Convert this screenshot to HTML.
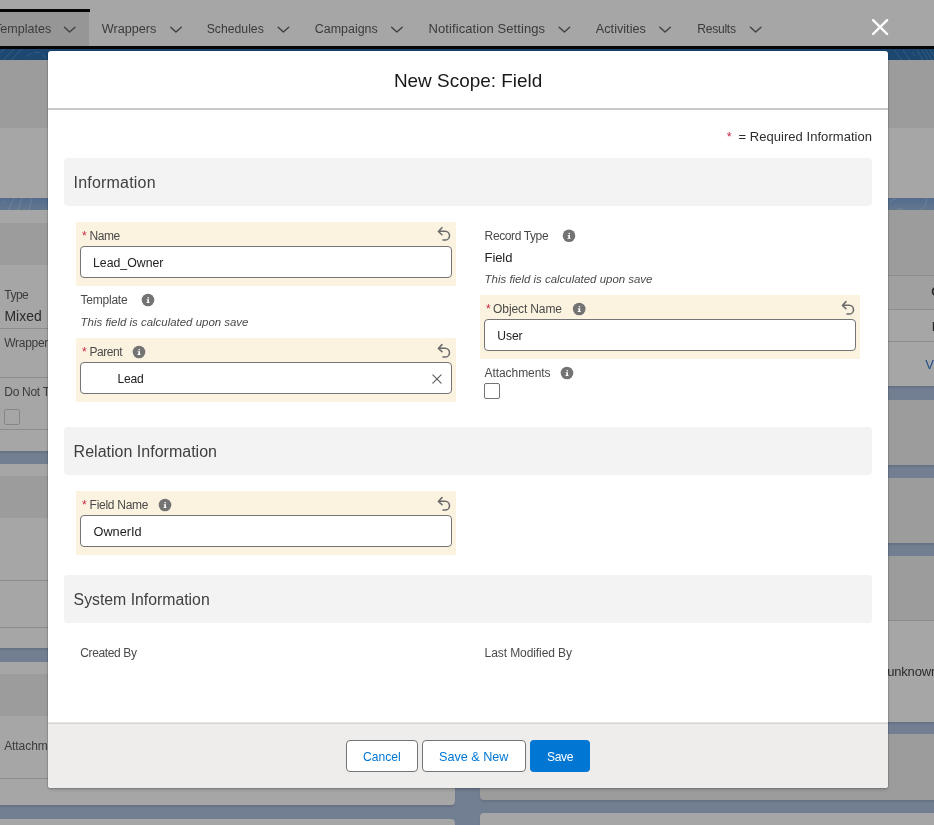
<!DOCTYPE html>
<html lang="en">
<head>
<meta charset="utf-8">
<title>New Scope: Field</title>
<style>
html,body{margin:0;padding:0}
body{width:934px;height:825px;position:relative;overflow:hidden;background:#a6a6a6;font-family:"Liberation Sans",sans-serif;}
.b{position:absolute;display:block}
.tx{position:absolute;white-space:pre;line-height:20px;margin:0;font-weight:400;text-decoration:none;}
button{box-sizing:border-box;margin:0;padding:0;font:inherit;text-align:left;-webkit-appearance:none;appearance:none;overflow:visible;cursor:pointer}
#page,#modal{position:absolute;left:0;top:0;width:934px;height:825px;will-change:transform}
</style>
</head>
<body>
<!-- dimmed page behind the modal -->
<div id="page">
<div class="b" style="left:0px;top:0px;width:934px;height:46px;background:#a6a6a6;"></div>
<div class="b" style="left:0px;top:12px;width:89px;height:34px;background:#969696;"></div>
<div class="b" style="left:0px;top:9px;width:90px;height:3px;background:#080707;"></div>
<div class="b" style="left:0px;top:46px;width:934px;height:3px;background:#080707;"></div>
<div class="b" style="left:0px;top:49px;width:934px;height:11px;background:#1b4670;background:linear-gradient(90deg,#1c4872,#1a446e 50%,#1c4771);"></div>
<div class="b" style="left:0px;top:60px;width:934px;height:68px;background:#9c9c9c;"></div>
<div class="b" style="left:0px;top:128px;width:934px;height:70px;background:#a6a6a6;"></div>
<div class="b" style="left:0px;top:198px;width:934px;height:12px;background:#57708f;background:linear-gradient(180deg,#526c8d,#63778f);"></div>
<svg class="b" style="left:0;top:49px" width="934" height="162" viewBox="0 49 934 162"><g fill="none" stroke="#fff" stroke-opacity=".11" stroke-width="1"><path d="M0 53 L5 49 M3 60 L14 49 M11 60 L22 49 M26 56.5 L31 53.5 M34 52.5 H40 M42 54 L46 58"/><path d="M894 50 L902 60 M903 50 L910 60 M912 52 L915 56 M917 50 L923 60 M922 50 L928 60 M926 50 L932 60 M930 50 L935 58"/><path d="M2 204 L5 201 M8 210 L14 198 M18 210 L22 198 M29 210 L32 198"/><path d="M890 202 Q892 199 896 199 M896 210 Q900 208 903 209 M920 210 Q928 206 926 198"/></g></svg>
<div class="b" style="left:0px;top:210px;width:934px;height:615px;background:#727f92;"></div>
<div class="b" style="left:-10px;top:210px;width:465px;height:241px;background:#a6a6a6;border-radius:0 0 4px 4px;box-shadow:0 2px 2px 0 rgba(0,0,0,.10);"></div>
<div class="b" style="left:-10px;top:223px;width:465px;height:42px;background:#9c9c9c;"></div>
<div class="b" style="left:-10px;top:328px;width:465px;height:1px;background:#8d8d8d;"></div>
<div class="b" style="left:-10px;top:377px;width:465px;height:1px;background:#8d8d8d;"></div>
<div class="b" style="left:-10px;top:429px;width:465px;height:1px;background:#8d8d8d;"></div>
<div class="b" style="left:4px;top:409px;width:16px;height:16px;background:#a6a6a6;box-sizing:border-box;border:1px solid #868686;border-radius:2px;"></div>
<div class="b" style="left:-10px;top:464px;width:465px;height:184px;background:#a6a6a6;border-radius:4px;box-shadow:0 2px 2px 0 rgba(0,0,0,.10);"></div>
<div class="b" style="left:-10px;top:476px;width:465px;height:42px;background:#9c9c9c;"></div>
<div class="b" style="left:-10px;top:580px;width:465px;height:1px;background:#8d8d8d;"></div>
<div class="b" style="left:-10px;top:627px;width:465px;height:1px;background:#8d8d8d;"></div>
<div class="b" style="left:-10px;top:662px;width:465px;height:143px;background:#a6a6a6;border-radius:4px;box-shadow:0 2px 2px 0 rgba(0,0,0,.10);"></div>
<div class="b" style="left:-10px;top:674px;width:465px;height:42px;background:#9c9c9c;"></div>
<div class="b" style="left:-10px;top:778px;width:465px;height:1px;background:#8d8d8d;"></div>
<div class="b" style="left:-10px;top:818.5px;width:465px;height:21.5px;background:#a6a6a6;border-radius:4px;box-shadow:0 2px 2px 0 rgba(0,0,0,.10);"></div>
<div class="b" style="left:480px;top:210px;width:470px;height:176px;background:#a6a6a6;border-radius:0 0 4px 4px;box-shadow:0 2px 2px 0 rgba(0,0,0,.10);"></div>
<div class="b" style="left:480px;top:210px;width:470px;height:65px;background:#9c9c9c;"></div>
<div class="b" style="left:480px;top:276px;width:470px;height:33px;background:#a0a0a0;"></div>
<div class="b" style="left:480px;top:275px;width:470px;height:1px;background:#8d8d8d;"></div>
<div class="b" style="left:480px;top:309px;width:470px;height:1px;background:#8d8d8d;"></div>
<div class="b" style="left:480px;top:341px;width:470px;height:1px;background:#8d8d8d;"></div>
<div class="b" style="left:480px;top:399.5px;width:470px;height:65.5px;background:#9c9c9c;border-radius:4px;box-shadow:0 2px 2px 0 rgba(0,0,0,.10);"></div>
<div class="b" style="left:480px;top:477.5px;width:470px;height:65.0px;background:#9c9c9c;border-radius:4px;box-shadow:0 2px 2px 0 rgba(0,0,0,.10);"></div>
<div class="b" style="left:480px;top:555.5px;width:470px;height:166.5px;background:#a6a6a6;border-radius:4px;box-shadow:0 2px 2px 0 rgba(0,0,0,.10);"></div>
<div class="b" style="left:480px;top:555.5px;width:470px;height:64.5px;background:#9c9c9c;border-radius:4px 4px 0 0;"></div>
<div class="b" style="left:480px;top:620px;width:470px;height:1px;background:#8d8d8d;"></div>
<div class="b" style="left:480px;top:734.3px;width:470px;height:65.30000000000007px;background:#9c9c9c;border-radius:4px;box-shadow:0 2px 2px 0 rgba(0,0,0,.10);"></div>
<div class="b" style="left:480px;top:812.6px;width:470px;height:27.399999999999977px;background:#a6a6a6;border-radius:4px;box-shadow:0 2px 2px 0 rgba(0,0,0,.10);"></div>
<a class="tx" style="top:19px;font-size:12.54px;color:#3b3b3b;right:882.80px;">Templates</a>
<a class="tx" style="top:19px;font-size:12.65px;color:#3b3b3b;left:101.80px;">Wrappers</a>
<a class="tx" style="top:19px;font-size:12.23px;color:#3b3b3b;left:206.70px;">Schedules</a>
<a class="tx" style="top:19px;font-size:12.45px;color:#3b3b3b;left:314.80px;">Campaigns</a>
<a class="tx" style="top:19px;font-size:13.0px;color:#3b3b3b;left:428.60px;letter-spacing:0.075px;">Notification Settings</a>
<a class="tx" style="top:19px;font-size:12.7px;color:#3b3b3b;left:595.80px;">Activities</a>
<a class="tx" style="top:19px;font-size:12.09px;color:#3b3b3b;left:697.30px;letter-spacing:-0.271px;">Results</a>
<svg class="b" style="left:62px;top:24px" width="16" height="12" viewBox="62 24 16 12"><path d="M64.45 27.2 L69.65 32 L75.00 27.2" fill="none" stroke="#3f3f3f" stroke-width="1.35" stroke-linecap="round" stroke-linejoin="round"/></svg>
<svg class="b" style="left:168px;top:24px" width="16" height="12" viewBox="168 24 16 12"><path d="M170.75 27.2 L175.95 32 L181.30 27.2" fill="none" stroke="#3f3f3f" stroke-width="1.35" stroke-linecap="round" stroke-linejoin="round"/></svg>
<svg class="b" style="left:275px;top:24px" width="16" height="12" viewBox="275 24 16 12"><path d="M278.15 27.2 L283.35 32 L288.70 27.2" fill="none" stroke="#3f3f3f" stroke-width="1.35" stroke-linecap="round" stroke-linejoin="round"/></svg>
<svg class="b" style="left:389px;top:24px" width="16" height="12" viewBox="389 24 16 12"><path d="M391.65 27.2 L396.85 32 L402.20 27.2" fill="none" stroke="#3f3f3f" stroke-width="1.35" stroke-linecap="round" stroke-linejoin="round"/></svg>
<svg class="b" style="left:556px;top:24px" width="16" height="12" viewBox="556 24 16 12"><path d="M559.15 27.2 L564.35 32 L569.70 27.2" fill="none" stroke="#3f3f3f" stroke-width="1.35" stroke-linecap="round" stroke-linejoin="round"/></svg>
<svg class="b" style="left:657px;top:24px" width="16" height="12" viewBox="657 24 16 12"><path d="M659.85 27.2 L665.05 32 L670.40 27.2" fill="none" stroke="#3f3f3f" stroke-width="1.35" stroke-linecap="round" stroke-linejoin="round"/></svg>
<svg class="b" style="left:748px;top:24px" width="16" height="12" viewBox="748 24 16 12"><path d="M750.45 27.2 L755.65 32 L761.00 27.2" fill="none" stroke="#3f3f3f" stroke-width="1.35" stroke-linecap="round" stroke-linejoin="round"/></svg>
<span class="tx" style="top:285px;font-size:12.0px;color:#3c3c3c;left:4.30px;letter-spacing:-0.539px;">Type</span>
<span class="tx" style="top:306px;font-size:13.94px;color:#2a2a2a;left:4.50px;">Mixed</span>
<span class="tx" style="top:333px;font-size:12px;color:#3c3c3c;left:4.30px;letter-spacing:-0.300px;">Wrapper Name</span>
<span class="tx" style="top:382px;font-size:12px;color:#3c3c3c;left:4.30px;letter-spacing:-0.300px;">Do Not Track</span>
<span class="tx" style="top:736px;font-size:12.0px;color:#3c3c3c;left:4.20px;letter-spacing:-0.080px;">Attachments</span>
<span class="tx" style="top:662px;font-size:13.02px;color:#2a2a2a;left:887.20px;letter-spacing:-0.187px;">unknown</span>
<span class="tx" style="top:282px;font-size:11.97px;color:#2a2a2a;left:931.30px;font-weight:700;">C</span>
<span class="tx" style="top:317px;font-size:12.93px;color:#2a2a2a;left:931.70px;">L</span>
<span class="tx" style="top:355px;font-size:12.93px;color:#1c4f8a;left:925.30px;">View All</span>
</div>
<!-- modal -->
<div id="modal">
<div class="b" style="left:48px;top:51px;width:840px;height:737px;background:#fff;border-radius:3px;box-shadow:0 0 0 1px rgba(0,0,0,.10),0 2px 3px 0 rgba(0,0,0,.16);"></div>
<div class="b" style="left:48px;top:108px;width:840px;height:2px;background:#c9c9c9;"></div>
<div class="b" style="left:48px;top:722px;width:840px;height:66px;background:#eeedeb;border-radius:0 0 3px 3px;"></div>
<div class="b" style="left:48px;top:722px;width:840px;height:2px;background:#dcdbda;background:linear-gradient(180deg,#e6e5e4 50%,#d6d5d4 50%);"></div>
<div class="b" style="left:64px;top:158px;width:808px;height:48px;background:#f3f3f3;border-radius:4px;"></div>
<div class="b" style="left:64px;top:427px;width:808px;height:48px;background:#f3f3f3;border-radius:4px;"></div>
<div class="b" style="left:64px;top:575px;width:808px;height:48px;background:#f3f3f3;border-radius:4px;"></div>
<div class="b" style="left:76px;top:222px;width:380px;height:64px;background:#fbf3e0;"></div>
<div class="b" style="left:76px;top:338px;width:380px;height:64px;background:#fbf3e0;"></div>
<div class="b" style="left:480px;top:295px;width:380px;height:63.69999999999999px;background:#fbf3e0;"></div>
<div class="b" style="left:76px;top:491px;width:380px;height:63.60000000000002px;background:#fbf3e0;"></div>
<div class="b" style="left:80px;top:246px;width:372px;height:32px;background:#fff;box-sizing:border-box;border:1px solid #747474;border-radius:4px;"></div>
<div class="b" style="left:80px;top:362px;width:372px;height:32px;background:#fff;box-sizing:border-box;border:1px solid #747474;border-radius:4px;"></div>
<div class="b" style="left:484px;top:319.3px;width:372px;height:31.399999999999977px;background:#fff;box-sizing:border-box;border:1px solid #747474;border-radius:4px;"></div>
<div class="b" style="left:80px;top:515px;width:372px;height:32px;background:#fff;box-sizing:border-box;border:1px solid #747474;border-radius:4px;"></div>
<div class="b" style="left:484px;top:383px;width:16px;height:16px;background:#fff;box-sizing:border-box;border:1px solid #747474;border-radius:2px;"></div>
<svg class="b" style="left:140px;top:292px" width="17" height="17" viewBox="140 292 17 17"><g transform="translate(148 300)"><circle cx="0" cy="0" r="6.3" fill="#737373"/><path d="M-1.5 -0.85 H1 V2.3 H1.6 V2.9 H-1.6 V2.3 H-0.7 V-0.3 H-1.5 Z" fill="#fff"/><circle cx="0.25" cy="-2.3" r="0.8" fill="#fff"/></g></svg>
<svg class="b" style="left:131px;top:344px" width="17" height="17" viewBox="131 344 17 17"><g transform="translate(139 352)"><circle cx="0" cy="0" r="6.3" fill="#737373"/><path d="M-1.5 -0.85 H1 V2.3 H1.6 V2.9 H-1.6 V2.3 H-0.7 V-0.3 H-1.5 Z" fill="#fff"/><circle cx="0.25" cy="-2.3" r="0.8" fill="#fff"/></g></svg>
<svg class="b" style="left:561px;top:227px" width="17" height="17" viewBox="561 227 17 17"><g transform="translate(569 235.8)"><circle cx="0" cy="0" r="6.3" fill="#737373"/><path d="M-1.5 -0.85 H1 V2.3 H1.6 V2.9 H-1.6 V2.3 H-0.7 V-0.3 H-1.5 Z" fill="#fff"/><circle cx="0.25" cy="-2.3" r="0.8" fill="#fff"/></g></svg>
<svg class="b" style="left:571px;top:301px" width="17" height="17" viewBox="571 301 17 17"><g transform="translate(579.2 309)"><circle cx="0" cy="0" r="6.3" fill="#737373"/><path d="M-1.5 -0.85 H1 V2.3 H1.6 V2.9 H-1.6 V2.3 H-0.7 V-0.3 H-1.5 Z" fill="#fff"/><circle cx="0.25" cy="-2.3" r="0.8" fill="#fff"/></g></svg>
<svg class="b" style="left:559px;top:365px" width="17" height="17" viewBox="559 365 17 17"><g transform="translate(567 373)"><circle cx="0" cy="0" r="6.3" fill="#737373"/><path d="M-1.5 -0.85 H1 V2.3 H1.6 V2.9 H-1.6 V2.3 H-0.7 V-0.3 H-1.5 Z" fill="#fff"/><circle cx="0.25" cy="-2.3" r="0.8" fill="#fff"/></g></svg>
<svg class="b" style="left:157px;top:497px" width="17" height="17" viewBox="157 497 17 17"><g transform="translate(165 505)"><circle cx="0" cy="0" r="6.3" fill="#737373"/><path d="M-1.5 -0.85 H1 V2.3 H1.6 V2.9 H-1.6 V2.3 H-0.7 V-0.3 H-1.5 Z" fill="#fff"/><circle cx="0.25" cy="-2.3" r="0.8" fill="#fff"/></g></svg>
<svg class="b" style="left:436px;top:225px" width="17" height="18" viewBox="436 225 17 18"><path transform="translate(438 231.27)" d="M3.95 -3.6 L0.4 0.25 L3.95 3.45 M0.7 0 H7.1 A4.4 4.4 0 0 1 7.1 8.8 H5" fill="none" stroke="#6b6b6b" stroke-width="1.55" stroke-linecap="round" stroke-linejoin="round"/></svg>
<svg class="b" style="left:436px;top:342px" width="17" height="18" viewBox="436 342 17 18"><path transform="translate(438 348.24)" d="M3.95 -3.6 L0.4 0.25 L3.95 3.45 M0.7 0 H7.1 A4.4 4.4 0 0 1 7.1 8.8 H5" fill="none" stroke="#6b6b6b" stroke-width="1.55" stroke-linecap="round" stroke-linejoin="round"/></svg>
<svg class="b" style="left:840px;top:299px" width="17" height="18" viewBox="840 299 17 18"><path transform="translate(842 305.24)" d="M3.95 -3.6 L0.4 0.25 L3.95 3.45 M0.7 0 H7.1 A4.4 4.4 0 0 1 7.1 8.8 H5" fill="none" stroke="#6b6b6b" stroke-width="1.55" stroke-linecap="round" stroke-linejoin="round"/></svg>
<svg class="b" style="left:436px;top:495px" width="17" height="18" viewBox="436 495 17 18"><path transform="translate(438 501.24)" d="M3.95 -3.6 L0.4 0.25 L3.95 3.45 M0.7 0 H7.1 A4.4 4.4 0 0 1 7.1 8.8 H5" fill="none" stroke="#6b6b6b" stroke-width="1.55" stroke-linecap="round" stroke-linejoin="round"/></svg>
<svg class="b" style="left:430px;top:372px" width="14" height="14" viewBox="430 372 14 14"><path d="M432.8 374.8 L441.1 383.1 M441.1 374.8 L432.8 383.1" fill="none" stroke="#5f5f5f" stroke-width="1.15" stroke-linecap="round"/></svg>
<button type="button" class="b" style="left:346px;top:740px;width:72px;height:32px;background:#fff;border:1px solid #747474;border-radius:4px;"><span class="tx" style="top:6px;font-size:12.09px;color:#0176d3;left:16.00px;letter-spacing:-0.007px;">Cancel</span></button>
<button type="button" class="b" style="left:422px;top:740px;width:104px;height:32px;background:#fff;border:1px solid #747474;border-radius:4px;"><span class="tx" style="top:6px;font-size:12.63px;color:#0176d3;left:16.00px;">Save &amp; New</span></button>
<button type="button" class="b" style="left:530px;top:740px;width:60px;height:32px;background:#0176d3;border:0;border-radius:4px;"><span class="tx" style="top:7px;font-size:12.09px;color:#ffffff;left:17.00px;letter-spacing:-0.355px;">Save</span></button>
<h2 class="tx" style="top:71px;font-size:18.95px;color:#181818;left:393.90px;">New Scope: Field</h2>
<span class="tx" style="top:127px;font-size:12.54px;color:#c62840;left:726.80px;">*</span>
<span class="tx" style="top:127px;font-size:13.0px;color:#2e2e2e;left:738.50px;letter-spacing:0.042px;">= Required Information</span>
<h3 class="tx" style="top:173px;font-size:16.0px;color:#404040;left:73.60px;letter-spacing:0.195px;">Information</h3>
<h3 class="tx" style="top:442px;font-size:16.0px;color:#404040;left:73.60px;letter-spacing:0.011px;">Relation Information</h3>
<h3 class="tx" style="top:590px;font-size:15.8px;color:#404040;left:73.60px;">System Information</h3>
<abbr class="tx" style="top:226px;font-size:12px;color:#c62840;left:82.00px;letter-spacing:-0.300px;">*</abbr>
<label class="tx" style="top:226px;font-size:12.0px;color:#4a4a4a;left:89.60px;letter-spacing:-0.439px;">Name</label>
<label class="tx" style="top:290px;font-size:12.0px;color:#4a4a4a;left:80.60px;letter-spacing:-0.243px;">Template</label>
<span class="tx" style="top:312px;font-size:11.44px;color:#4a4a4a;left:80.60px;font-style:italic;">This field is calculated upon save</span>
<abbr class="tx" style="top:342px;font-size:12px;color:#c62840;left:82.00px;letter-spacing:-0.300px;">*</abbr>
<label class="tx" style="top:342px;font-size:12.0px;color:#4a4a4a;left:89.40px;letter-spacing:-0.412px;">Parent</label>
<label class="tx" style="top:226px;font-size:12.0px;color:#4a4a4a;left:484.60px;letter-spacing:-0.383px;">Record Type</label>
<span class="tx" style="top:248px;font-size:13.02px;color:#222222;left:484.60px;letter-spacing:-0.109px;">Field</span>
<span class="tx" style="top:269px;font-size:11.44px;color:#4a4a4a;left:484.60px;font-style:italic;">This field is calculated upon save</span>
<abbr class="tx" style="top:299px;font-size:12px;color:#c62840;left:486.00px;letter-spacing:-0.300px;">*</abbr>
<label class="tx" style="top:299px;font-size:12.0px;color:#4a4a4a;left:493.10px;letter-spacing:-0.113px;">Object Name</label>
<label class="tx" style="top:363px;font-size:12.0px;color:#4a4a4a;left:484.60px;letter-spacing:-0.080px;">Attachments</label>
<abbr class="tx" style="top:495px;font-size:12px;color:#c62840;left:82.00px;letter-spacing:-0.300px;">*</abbr>
<label class="tx" style="top:495px;font-size:12.0px;color:#4a4a4a;left:89.60px;letter-spacing:-0.273px;">Field Name</label>
<label class="tx" style="top:643px;font-size:12.0px;color:#4a4a4a;left:80.20px;letter-spacing:-0.359px;">Created By</label>
<label class="tx" style="top:643px;font-size:12.0px;color:#4a4a4a;left:484.60px;letter-spacing:-0.088px;">Last Modified By</label>
<span class="tx" style="top:253px;font-size:12.31px;color:#222222;left:93.00px;">Lead_Owner</span>
<span class="tx" style="top:369px;font-size:12.09px;color:#222222;left:117.40px;letter-spacing:-0.166px;">Lead</span>
<span class="tx" style="top:326px;font-size:12.09px;color:#222222;left:497.30px;letter-spacing:-0.077px;">User</span>
<span class="tx" style="top:522px;font-size:12.72px;color:#222222;left:93.50px;">OwnerId</span>
</div>
<svg class="b" style="left:868px;top:15px" width="24" height="24" viewBox="868 15 24 24"><path d="M873.1 20.2 L887.1 34 M887.1 20.2 L873.1 34" fill="none" stroke="#fff" stroke-width="2.4" stroke-linecap="round"/></svg>
</body>
</html>
